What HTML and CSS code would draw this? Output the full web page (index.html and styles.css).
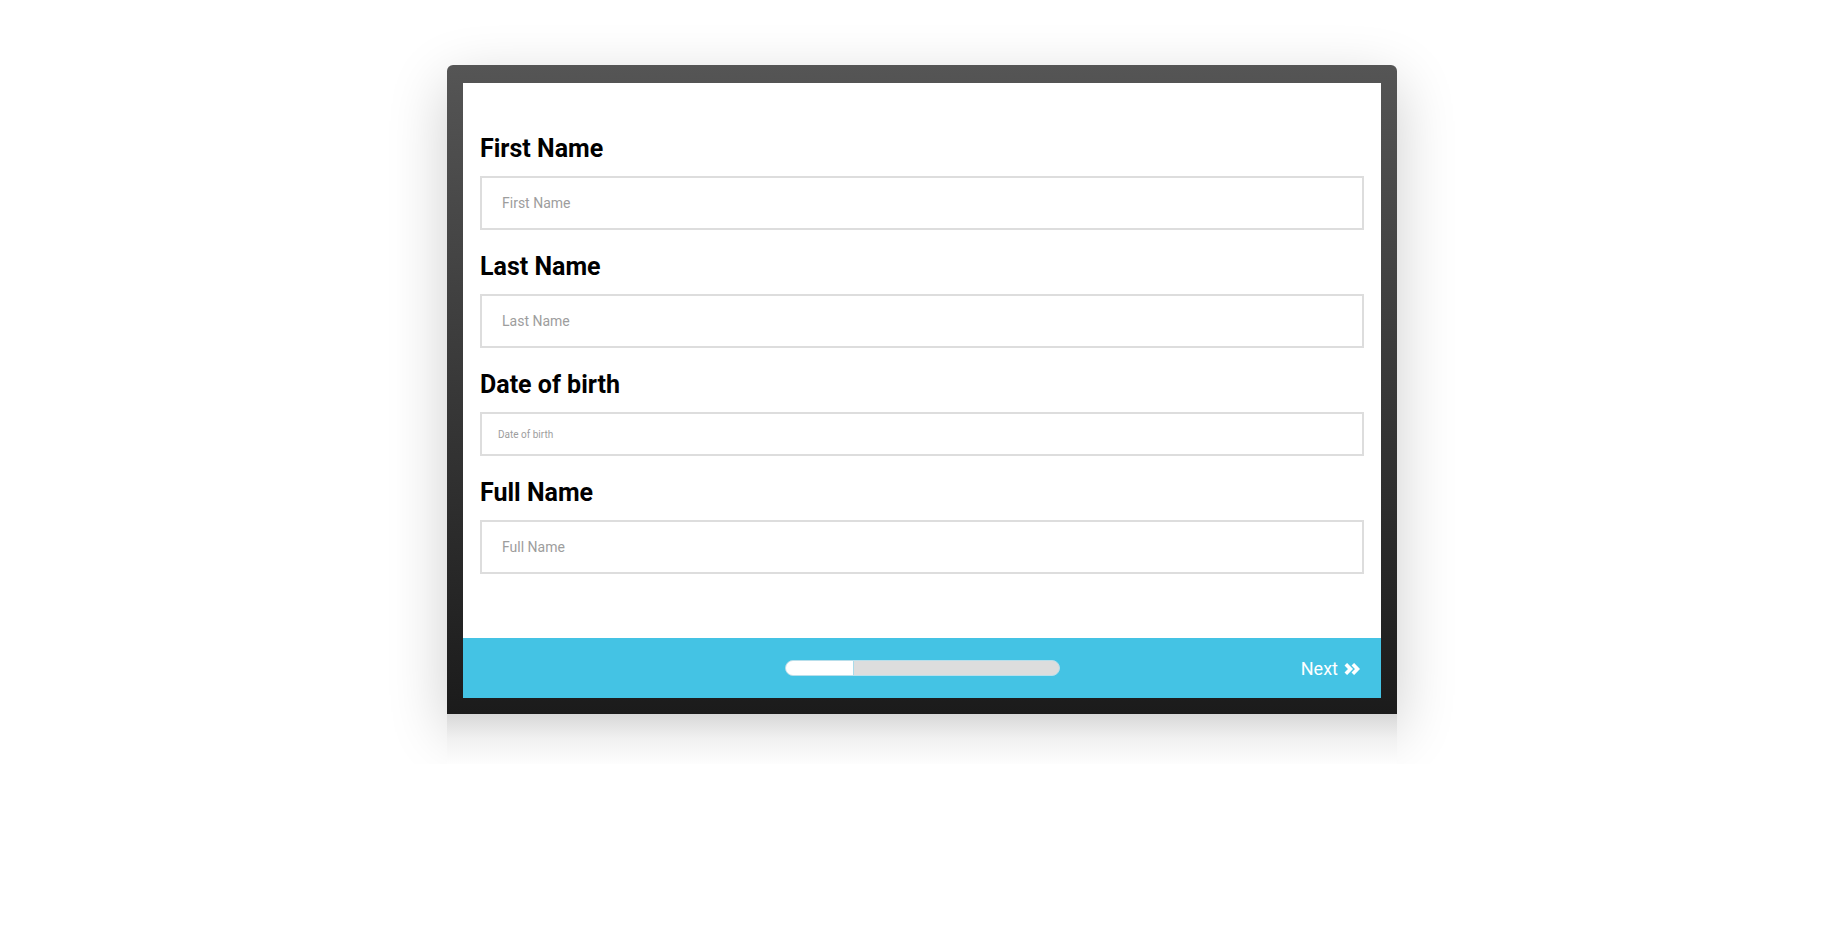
FILE: index.html
```html
<!DOCTYPE html>
<html lang="en">
<head>
<meta charset="utf-8">
<title>Form</title>
<link rel="stylesheet" href="styles.css">
</head>
<body>
<div class="stage">
  <div class="frame">
    <div class="screen">
      <form class="form">
        <div class="field">
          <label class="label">First Name</label>
          <input class="input" type="text" placeholder="First Name">
        </div>
        <div class="field">
          <label class="label">Last Name</label>
          <input class="input" type="text" placeholder="Last Name">
        </div>
        <div class="field">
          <label class="label">Date of birth</label>
          <input class="input input-date" type="text" placeholder="Date of birth">
        </div>
        <div class="field">
          <label class="label">Full Name</label>
          <input class="input" type="text" placeholder="Full Name">
        </div>
      </form>
      <div class="footer">
        <div class="progress"><div class="progress-fill" style="width:25%"></div></div>
        <a class="next" href="#">Next
          <svg class="next-icon" viewBox="0 0 16 12" width="16" height="12" aria-hidden="true">
            <polyline points="1.8,1.2 6.5,6 1.8,10.8" fill="none" stroke="#fff" stroke-width="3.6" stroke-linejoin="miter"/>
            <polyline points="8.8,1.2 13.5,6 8.8,10.8" fill="none" stroke="#fff" stroke-width="3.6" stroke-linejoin="miter"/>
          </svg>
        </a>
      </div>
    </div>
  </div>
  <div class="base"></div>
</div>
</body>
</html>
```
FILE: styles.css
```css
html, body {
  margin: 0;
  padding: 0;
  background: #ffffff;
  font-family: Roboto, "Liberation Sans", Arial, sans-serif;
}

.stage {
  width: 950px;
  margin: 65px 0 0 calc(50% - 473.5px);
}

.frame {
  padding: 18px 16px 16px;
  border-radius: 6px 6px 0 0;
  background: linear-gradient(to bottom, #555555 0%, #1b1b1b 100%);
  box-shadow: 0 18px 60px rgba(0, 0, 0, 0.2);
}

.base {
  height: 50px;
  background: linear-gradient(to bottom, #d8d8d8 0%, #f1f1f1 50%, #fdfdfd 100%);
}

.screen {
  background: #ffffff;
}

.form {
  padding: 51px 17px 64px;
}

.field + .field {
  margin-top: 22px;
}

.label {
  display: block;
  margin-bottom: 12px;
  font-size: 25px;
  line-height: 30px;
  font-weight: 700;
  color: #000000;
}

.input {
  display: block;
  box-sizing: border-box;
  width: 100%;
  height: 54px;
  margin: 0;
  padding: 0 20px;
  border: 2px solid #dddddd;
  border-radius: 0;
  outline: none;
  background: #ffffff;
  font-family: Roboto, "Liberation Sans", Arial, sans-serif;
  font-size: 14px;
  color: #333333;
}

.input::placeholder {
  color: #9d9d9d;
}

.input-date {
  height: 44px;
  padding: 0 16px;
  font-size: 10px;
}

.footer {
  display: grid;
  grid-template-columns: 1fr auto 1fr;
  align-items: center;
  height: 60px;
  padding-right: 21px;
  padding-left: 21px;
  background: #44c3e4;
}

.progress {
  grid-column: 2;
  box-sizing: border-box;
  width: 275px;
  height: 16px;
  border: 1px solid #b8dfeb;
  border-radius: 8px;
  background: #dddddd;
  overflow: hidden;
}

.progress-fill {
  box-sizing: border-box;
  height: 100%;
  background: #ffffff;
  border-right: 1px solid #a9dbea;
}

.next {
  grid-column: 3;
  justify-self: end;
  display: flex;
  align-items: center;
  gap: 6px;
  color: #ffffff;
  font-size: 18px;
  text-decoration: none;
}

.next-icon {
  display: block;
  margin-top: 1px;
}
```
